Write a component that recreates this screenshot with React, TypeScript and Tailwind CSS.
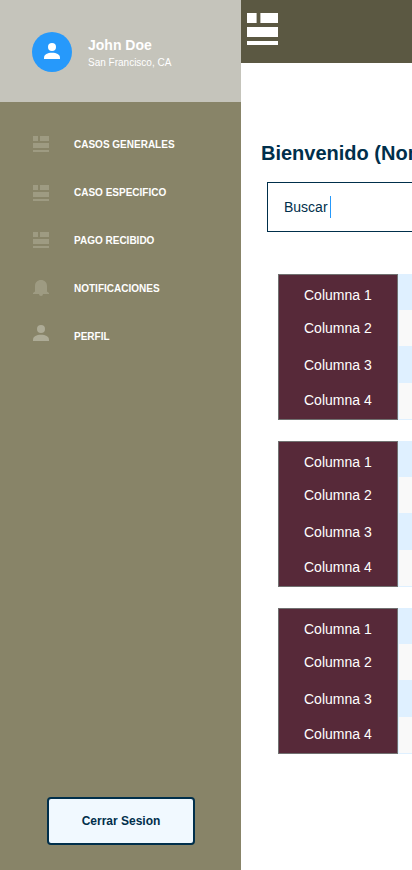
import React from 'react';

type IconProps = { className?: string };

function DashboardIcon({ className }: IconProps) {
  return (
    <svg viewBox="0 0 16 16" className={className} fill="currentColor" shapeRendering="crispEdges">
      <path d="M0 0h5v5H0zM7 0h9v5H7zM0 7h16v5H0zM0 14h16v2H0z" />
    </svg>
  );
}

function MenuIcon() {
  return (
    <svg viewBox="0 0 31 32" className="h-8 w-[31px] text-white" fill="currentColor">
      <path d="M0 0h9.6v10H0zM13.4 0H31v10H13.4zM0 14h31v10H0zM0 28h31v4H0z" />
    </svg>
  );
}

function PersonIcon({ className }: IconProps) {
  return (
    <svg viewBox="0 0 16 16" className={className} fill="currentColor">
      <circle cx="8" cy="4" r="4" />
      <path d="M0 16v-1.200C0 11.500 3.600 9.800 8 9.800s8 1.700 8 5V16z" />
    </svg>
  );
}

function BellIcon({ className }: IconProps) {
  return (
    <svg viewBox="0 0 16 16" className={className} fill="currentColor">
      <path d="M8 0c3.600 0 6 2.500 6 6v5.500l2 1.500v1H10a2 2 0 0 1-4 0H0v-1l2-1.500V6c0-3.500 2.400-6 6-6z" />
    </svg>
  );
}

const navItems = [
  { label: 'CASOS GENERALES', Icon: DashboardIcon, iconClass: 'size-4 text-[#9e9b82]' },
  { label: 'CASO ESPECIFICO', Icon: DashboardIcon, iconClass: 'size-4 mt-0.5 text-[#9e9b82]' },
  { label: 'PAGO RECIBIDO', Icon: DashboardIcon, iconClass: 'size-4 text-[#9e9b82]' },
  { label: 'NOTIFICACIONES', Icon: BellIcon, iconClass: 'size-4 text-[#9e9b82]' },
  { label: 'PERFIL', Icon: PersonIcon, iconClass: 'size-4 -mt-1.5 text-[#adab96]' },
];

function Sidebar() {
  return (
    <aside className="flex w-[241px] shrink-0 flex-col bg-[#888468]">
      <header className="flex h-[102px] shrink-0 items-center gap-4 bg-[#c5c4bb] pl-8 pb-0.5 pt-1">
        <div className="flex size-10 items-center justify-center rounded-full bg-[#2699fb] pb-0.5">
          <PersonIcon className="size-4 text-white" />
        </div>
        <div className="pt-[3px] text-white">
          <div className="text-[14px] font-bold leading-[18px]">John Doe</div>
          <div className="text-[10px] leading-[18px]">San Francisco, CA</div>
        </div>
      </header>
      <nav className="flex flex-col pt-[18px]">
        {navItems.map(({ label, Icon, iconClass }) => (
          <a key={label} className="flex h-12 items-center gap-[25px] pl-[33px]">
            <Icon className={iconClass} />
            <span className="pt-0.5 text-[10px] font-bold leading-4 text-white">{label}</span>
          </a>
        ))}
      </nav>
      <button className="mb-[25px] ml-[47px] mt-auto h-12 w-[148px] rounded-[4px] border-2 border-[#002f4b] bg-[#f1f9ff] text-[12px] font-bold text-[#002f4b]">
        Cerrar Sesion
      </button>
    </aside>
  );
}

function CaseTable() {
  return (
    <div className="flex h-[146px]">
      <div className="flex w-[120px] shrink-0 flex-col border border-[#707070] bg-[#572939] pl-[25px] text-[14px] leading-5 text-white">
        <span className="mt-2.5">Columna 1</span>
        <span className="mt-[13px]">Columna 2</span>
        <span className="mt-[17px]">Columna 3</span>
        <span className="mt-[15px]">Columna 4</span>
      </div>
      <div className="flex w-[300px] shrink-0 flex-col border-b border-l border-[#dff0ff] bg-[#f9f9f9]">
        <div className="h-9 bg-[#dff0ff]" />
        <div className="h-9" />
        <div className="h-[37px] bg-[#dff0ff]" />
      </div>
    </div>
  );
}

export default function App() {
  return (
    <div className="flex h-[870px] w-[412px] overflow-hidden bg-white font-['Liberation_Sans',Arial,sans-serif]">
      <Sidebar />
      <main className="min-w-0 flex-1 overflow-hidden">
        <div className="h-[63px] bg-[#5b5842] pl-1.5 pt-[13px]">
          <MenuIcon />
        </div>
        <h1 className="mt-[78px] whitespace-nowrap pl-5 text-[20px] font-bold leading-6 text-[#002f4b]">
          Bienvenido (Nombre)
        </h1>
        <div className="ml-[26px] mt-[17px] flex h-[50px] w-[320px] items-center border border-[#002f4b] pl-4 text-[14px] text-[#002f4b]">
          <span>Buscar</span>
          <span className="ml-0.5 h-[22px] w-px bg-[#2699fb]" />
        </div>
        <div className="ml-[37px] mt-[42px] flex flex-col gap-[21px]">
          <CaseTable />
          <CaseTable />
          <CaseTable />
        </div>
      </main>
    </div>
  );
}
